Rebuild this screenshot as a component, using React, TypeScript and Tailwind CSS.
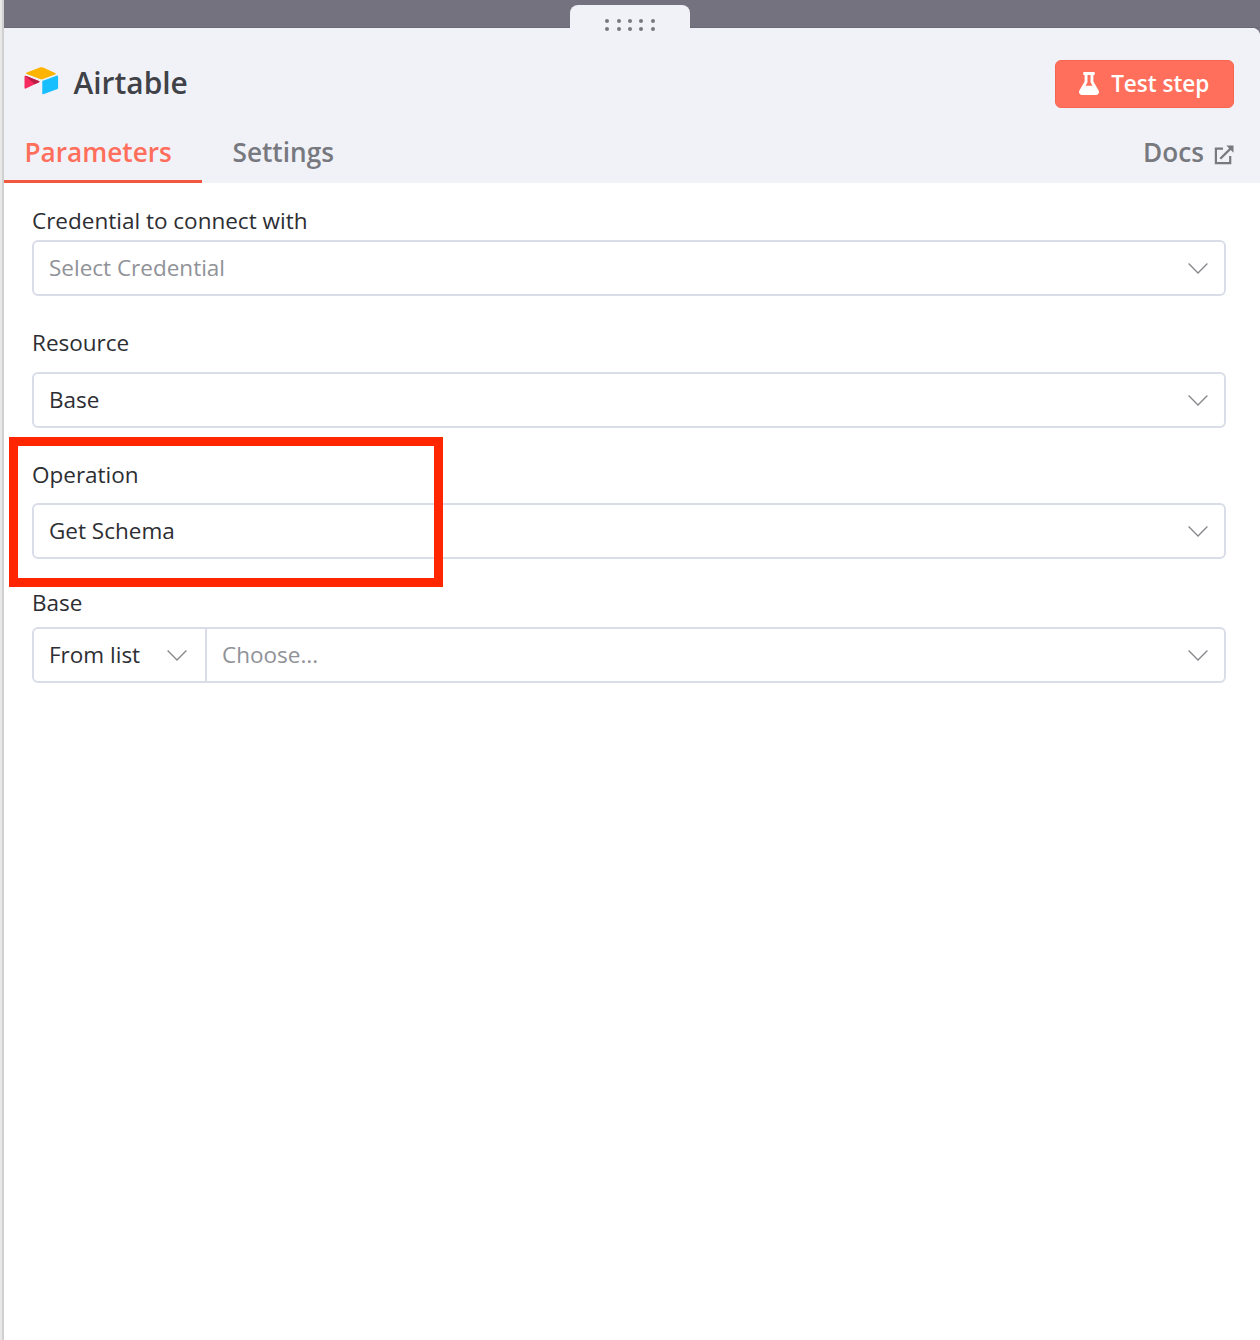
const dragDots = [0, 1, 2, 3, 4, 5, 6, 7, 8, 9];

function AirtableLogo() {
  return (
    <svg width="34.5" height="28" viewBox="0 0 34 28" preserveAspectRatio="none" className="relative -top-px" aria-hidden="true">
      <path
        d="M15.6.5 2.7 5.6c-.8.3-.8 1.2 0 1.5l13 5c1.1.4 2.2.4 3.2 0l11.8-4.5c.8-.3.8-1.2 0-1.5L18.9.6c-1.1-.4-2.2-.4-3.3-.1Z"
        fill="#fcb400"
      />
      <path d="M18 14.6v12c0 .6.5.9 1 .7l14-5.3c.4-.2.6-.4.6-.8V9.200c0-.6-.5-.9-1-.7L18.6 13.8c-.4.2-.6.4-.6.8Z" fill="#18bfff" />
      <path d="M14.8 15.2 1.8 21.6c-.6.3-1.3 0-1.3-.7V9.500c0-.6.5-.9 1.2-.7l12.900 5.100c.8.3.8 1 .2 1.300Z" fill="#f82b60" />
      <path d="M14.8 15.2 10.6 17.2 1.2 8.700l.5.100 12.900 5.100c.8.3.8 1 .2 1.300Z" fill="#ba1e45" />
    </svg>
  );
}

function FlaskIcon() {
  return (
    <svg width="20" height="23" viewBox="0 0 20 23" className="relative -top-px" aria-hidden="true">
      <path
        fillRule="evenodd"
        d="M5.2 0h9.6c.6 0 1 .4 1 1v1c0 .6-.4 1-1 1h-.4v6.4l5.2 9.2c1.1 2-.2 4.4-2.5 4.4H2.9C.6 23-.7 20.6.4 18.6l5.2-9.2V3h-.4c-.6 0-1-.4-1-1V1c0-.6.4-1 1-1Zm3.3 3v7.2l-2 3.6h7l-2-3.6V3Z"
        fill="currentColor"
      />
    </svg>
  );
}

function ExternalIcon() {
  return (
    <svg width="20" height="20" viewBox="0 0 20 20" fill="none" stroke="currentColor" strokeWidth="2.2" className="relative top-[2px]" aria-hidden="true">
      <path d="M9 3.6H1.9v14.5h14.300V11" />
      <path d="M6.3 13.8 17.5 2.6" />
      <path d="M12.3.6h7.2v7.200Z" fill="currentColor" stroke="none" />
    </svg>
  );
}

function Chevron() {
  return (
    <svg width="20" height="12" viewBox="0 0 20 12" fill="none" stroke="#85878b" strokeWidth="1.3" aria-hidden="true">
      <path d="M.6 1.5 10 11 19.4 1.5" />
    </svg>
  );
}

type SelectProps = {
  value: string;
  placeholder?: boolean;
};

function Select({ value, placeholder }: SelectProps) {
  return (
    <button
      type="button"
      className="flex h-14 w-full items-center justify-between rounded-md border-2 border-[#d9dde8] bg-white pr-4 pl-[15px]"
    >
      <span className={placeholder ? 'pb-px text-[#909298]' : 'pb-px text-[#2d2e33]'}>{value}</span>
      <Chevron />
    </button>
  );
}

export default function App() {
  return (
    <div className="flex h-[1340px] w-[1260px] overflow-hidden bg-[#757280] font-['Open_Sans',sans-serif] text-[22.5px]">
      <div className="w-1 shrink-0 border-r-2 border-[#d0d0d0] bg-[#e8e8e8]" />

      <div className="flex flex-1 flex-col">
        {/* Drag handle */}
        <div className="flex h-7 shrink-0 items-end justify-center border-b border-[#6c6977] pr-1">
          <div className="relative top-px grid h-[23px] w-[120px] grid-cols-[repeat(5,4px)] content-start justify-center gap-x-[7.3px] gap-y-1 rounded-t-lg bg-[#f1f2f8] pt-[14px]">
            {dragDots.map((dot) => (
              <span key={dot} className="size-1 rounded-full bg-[#77797d]" />
            ))}
          </div>
        </div>

        <main className="flex-1 overflow-hidden rounded-tr-lg bg-white">
          <header className="flex h-[155px] flex-col justify-between bg-[#f1f2f8]">
            <div className="flex items-start justify-between pt-8 pr-[26px] pl-5">
              <div className="flex items-center gap-[15px] pt-[2px]">
                <AirtableLogo />
                <h1 className="relative top-px text-[29.9px] leading-10 font-semibold text-[#404247]">Airtable</h1>
              </div>
              <button className="flex h-12 w-[179.5px] items-center justify-center gap-3 rounded-md border border-[#f5654f] bg-[#ff6f5c] font-semibold text-white">
                <FlaskIcon />
                <span>Test step</span>
              </button>
            </div>

            <nav className="flex h-[60px] items-stretch text-[26.2px] font-semibold text-[#77797e]">
              <button className="w-[198px] border-b-[3px] border-[#f2573f] pl-[20.5px] text-left text-[#ff6f5c]">
                <span className="relative top-px">Parameters</span>
              </button>
              <button className="ml-[30.5px] pb-px">
                <span>Settings</span>
              </button>
              <button className="mr-[26px] ml-auto flex items-center gap-[10px] pb-px">
                <span>Docs</span>
                <ExternalIcon />
              </button>
            </nav>
          </header>

          <form className="flex flex-col pt-[21px] pr-[34px] pl-7 text-[#2d2e33]">
            <label className="h-9 leading-[33px]">Credential to connect with</label>
            <Select value="Select Credential" placeholder />

            <label className="mt-[30px] h-[46px] leading-[33px]">Resource</label>
            <Select value="Base" />

            <label className="mt-[30px] h-[45px] leading-[33px]">Operation</label>
            <Select value="Get Schema" />

            <label className="mt-[27px] h-[41px] leading-[33px]">Base</label>
            <div className="flex h-14 rounded-md border-2 border-[#d9dde8]">
              <button
                type="button"
                className="flex w-[173px] items-center justify-between border-r-2 border-[#d9dde8] pr-[18px] pl-[15px]"
              >
                <span className="pb-px">From list</span>
                <Chevron />
              </button>
              <button type="button" className="flex flex-1 items-center justify-between pr-4 pl-[15px] text-[#909298]">
                <span className="pb-px">Choose...</span>
                <Chevron />
              </button>
            </div>
          </form>
        </main>
      </div>

      {/* Highlight around the operation field */}
      <div className="absolute top-[437px] left-[9px] h-[150px] w-[434px] border-[9px] border-[#ff2600]" />
    </div>
  );
}
